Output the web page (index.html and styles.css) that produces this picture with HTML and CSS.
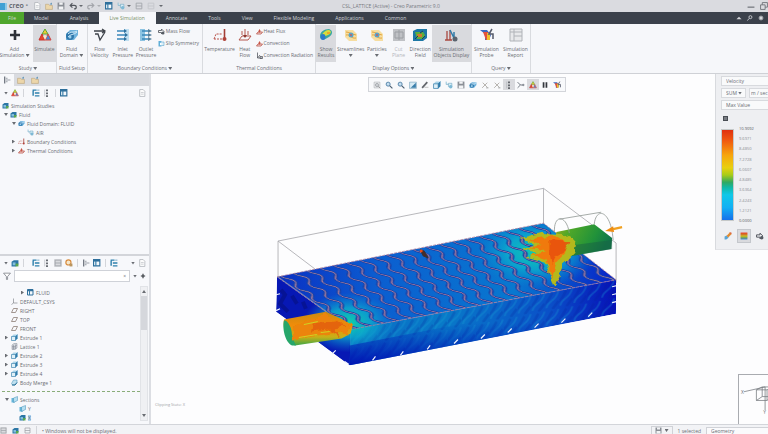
FILE: index.html
```html
<!DOCTYPE html>
<html lang="en">
<head>
  <meta charset="UTF-8">
  <meta name="viewport" content="width=device-width, initial-scale=1.0">
  <title>CSL_LATTICE (Active) - Creo Parametric 9.0</title>
  <link rel="stylesheet" href="styles.css">
</head>
<body>
  <svg class="sprite" aria-hidden="true">
    <defs>
      <linearGradient id="hot" x1="0" y1="0" x2="0" y2="1">
        <stop offset="0" stop-color="#e8301c"/><stop offset=".4" stop-color="#f2a81c"/>
        <stop offset=".6" stop-color="#b8d61c"/><stop offset="1" stop-color="#2a78d8"/>
      </linearGradient>
      <symbol id="i-plus" viewBox="0 0 14 14"><path d="M7 2v10M2 7h10" stroke="#2d3138" stroke-width="2.6"/></symbol>
      <symbol id="i-sim" viewBox="0 0 14 14">
        <path d="M7 1 10 6H4Z" fill="#f2c832" stroke="#58a838"/><path d="M4 6 7 12H1Z" fill="#e34a2c" stroke="#c8302c"/>
        <path d="M10 6 13 12H7Z" fill="#4c84d0" stroke="#d8443c"/><path d="M5 8h4L7 12Z" fill="#f3e6c8"/>
      </symbol>
      <symbol id="i-fluid" viewBox="0 0 14 14">
        <path d="M1 6 5 2h8v5l-4 5H1Z" fill="#6fb2dc"/><ellipse cx="5" cy="8" rx="4" ry="4" fill="#2f78ac"/>
        <path d="M3 9c2-3 6-2 9-5M3 6c3-3 6-1 9-3" fill="none" stroke="#d6edfa"/><circle cx="5" cy="9" r="1.5" fill="#9bd0ee"/>
      </symbol>
      <symbol id="i-velocity" viewBox="0 0 14 14">
        <path d="M1 3h11M9 1l3 2-3 2M2 6h3l2 6 5-8" fill="none" stroke="#3f444b" stroke-width="1.3"/>
      </symbol>
      <symbol id="i-inlet" viewBox="0 0 14 14">
        <path d="M8 1h5v12H8Z" fill="#bfdff1"/><path d="M1 3h8M1 7h9M1 11h8" stroke="#3a88ba" stroke-width="1.5"/>
        <path d="m8 1 3 2-3 2m1 0 3 2-3 2m-1 0 3 2-3 2" fill="#2d6f9c"/>
      </symbol>
      <symbol id="i-outlet" viewBox="0 0 14 14">
        <path d="M1 1h5v12H1Z" fill="#8cc3e2"/><path d="M3 3h7M3 7h8M3 11h7" stroke="#3a88ba" stroke-width="1.5"/>
        <path d="m9 1 4 2-4 2m0 0 4 2-4 2m0 0 4 2-4 2" fill="#557f9c"/>
      </symbol>
      <symbol id="i-mass" viewBox="0 0 14 14">
        <path d="M1 5h6V2l5 5-5 5V9H1Z" fill="none" stroke="#4a4e55" stroke-width="1.6"/><circle cx="10" cy="10" r="3" fill="#555b63"/>
      </symbol>
      <symbol id="i-slip" viewBox="0 0 14 14">
        <path d="M1 2h6v11H1Z" fill="#60afd8"/><path d="M7 4h5v7H7" fill="#d8eef9" stroke="#4f9bc4"/><path d="M4 5l5 3-5 3" fill="#fff"/>
      </symbol>
      <symbol id="i-temp" viewBox="0 0 14 14">
        <path d="M1 11 3 6h6M1 11h8" fill="none" stroke="#b9534a" stroke-dasharray="2 1"/>
        <path d="M11.500 1v9" stroke="#a33e36" stroke-width="1.6"/><circle cx="11.500" cy="11" r="2" fill="#b04239"/>
      </symbol>
      <symbol id="i-heat" viewBox="0 0 14 14">
        <path d="M1 12 4 8h9l-3 4ZM7 1v8M4 3v4M10 3v4" fill="none" stroke="#b5584e"/><path d="M5 7h4l-2 3Z" fill="#8e3a32"/>
      </symbol>
      <symbol id="i-flux" viewBox="0 0 14 14">
        <path d="M1 12 4 8h9l-3 4Z" fill="#f5e0dc" stroke="#b5483e" stroke-width="1.500"/><path d="M6 9c-3-3 1-4 0-7 3 2 4 4 2 7" fill="#c65446"/>
      </symbol>
      <symbol id="i-rad" viewBox="0 0 14 14"><path d="M3 1v11h9M3 12l5-6M8 9h5v4H8Z" fill="none" stroke="#4e5259" stroke-width="1.500"/></symbol>
      <symbol id="i-results" viewBox="0 0 14 14">
        <path d="M1 8C1 4 5 1 10 1c5 2 3 6 0 8s-9 5-9-1Z" fill="#39a8a0"/><path d="M3 7c1-3 4-5 7-5 3 1 2 4-1 5s-5 3-6 0Z" fill="#d8dd3c"/>
        <ellipse cx="4" cy="9" rx="2.500" ry="3" fill="#2c79c8"/><path d="M8 4h3v2H8Z" fill="#f0a726"/>
      </symbol>
      <symbol id="i-stream" viewBox="0 0 14 14">
        <path d="M1 2h8l4 4v7H5L1 9Z" fill="#f6dda0"/><path d="M2 4c3 0 5 2 10 3M2 7c4-1 5 4 10 3" fill="none" stroke="#e3a53c"/>
        <circle cx="7" cy="7" r="2.500" fill="#5ba4c9"/><circle cx="7" cy="7" r="1" fill="#c8605a"/>
      </symbol>
      <symbol id="i-cut" viewBox="0 0 14 14"><path d="M1 1h12v12H1Z" fill="#bfc1c5"/><path d="M3 4h8v6H3ZM7 2v10" fill="none" stroke="#9b9ea3"/></symbol>
      <symbol id="i-direction" viewBox="0 0 14 14">
        <path d="M0 3 4 1h10v9l-4 3H0Z" fill="#1d77a5"/><path d="M2 4h8l2 3-2 4H4Z" fill="#5cae3d"/><path d="M4 6h5v3H5Z" fill="#d07a2e"/>
        <path d="m2 11 3-3M7 5l3-2M9 11l3-3" stroke="#173b66"/>
      </symbol>
      <symbol id="i-objects" viewBox="0 0 14 14">
        <path d="M3 12V3M6 12V2M1 12h7" stroke="#a94940" stroke-width="1.300"/><path d="M6 2l4 8M10 4v6" stroke="#327ca9" stroke-width="1.500"/>
        <circle cx="11" cy="11" r="2.500" fill="#59636e"/>
      </symbol>
      <symbol id="i-probe" viewBox="0 0 14 14">
        <path d="M0 2h7l4 5-2 5H5V6Z" fill="#3c69c0"/><path d="M3 4h5v8H6Z" fill="#e4523c"/><path d="M7 5h3v7H7Z" fill="#efc22c"/>
        <path d="m12 1-3 5h4v5" fill="none" stroke="#54596a" stroke-width="1.500"/>
      </symbol>
      <symbol id="i-report" viewBox="0 0 14 14"><path d="M1 1h12v12H1ZM1 4h12M5 1v12M5 8h8" fill="#e8e9eb" stroke="#b0b3b8"/></symbol>
      <symbol id="i-tree" viewBox="0 0 14 14"><path d="M1 2h7M5 7h8M5 12h8M2 3v9" stroke="#2e80ad" stroke-width="2.500"/><path d="M9 2h4" stroke="#8db7d0" stroke-width="2"/></symbol>
      <symbol id="i-dots" viewBox="0 0 14 14"><path d="M7 1v3M7 6v3M7 11v3" stroke="#55595f" stroke-width="3"/><path d="M3 1v12" stroke="#a7abb1"/></symbol>
      <symbol id="i-grid" viewBox="0 0 14 14"><path d="M1 1h11v11H1Z" fill="#f3f8fb" stroke="#2f6f9b" stroke-width="2"/><path d="M1 3h11" stroke="#2f6f9b" stroke-width="3"/><path d="M5 3v9" stroke="#357ba8" stroke-width="2"/></symbol>
      <symbol id="i-doc" viewBox="0 0 14 14"><path d="M3 1h6l3 3v9H3Z" fill="#fff" stroke="#a9adb4" stroke-width="1.300"/><path d="M5 6h5M5 9h5" stroke="#a9adb4"/></symbol>
      <symbol id="i-folder" viewBox="0 0 14 14"><path d="M1 4h5l2 2h5v7H1Z" fill="#ecd6aa" stroke="#b8a27a"/><path d="m8 4 4-3v4" fill="#5e92b4"/></symbol>
      <symbol id="i-save" viewBox="0 0 14 14"><path d="M1 1h12v12H1Z" fill="#8b8f96"/><path d="M4 1h6v4H4ZM3 8h8v5H3Z" fill="#f2f3f5"/></symbol>
      <symbol id="i-undo" viewBox="0 0 14 14"><path d="M3 6h6c5 0 5 6 0 6M6 2 2 6l4 4" fill="none" stroke="currentColor" stroke-width="2"/></symbol>
      <symbol id="i-part" viewBox="0 0 14 14"><path d="M1 5 5 1h8v8l-4 4H1Z" fill="#a9d3e9"/><path d="M1 5h8v8H1ZM9 5l4-4" fill="#dff0f8" stroke="#3e83ad" stroke-width="1.300"/><path d="M9 5l4-4v8l-4 4Z" fill="#317cab"/></symbol>
      <symbol id="i-cubes" viewBox="0 0 14 14"><path d="M1 5 5 2h8v7l-4 4H1Z" fill="#2c76a5"/><path d="M3 6h5v5H3Z" fill="#82bedb"/><path d="M8 8h5v5H8Z" fill="#59a64e"/></symbol>
      <symbol id="i-air" viewBox="0 0 14 14"><path d="M2 1v5h4M6 4h6v6H6Z" fill="#d6edf6" stroke="#68a1bf"/><circle cx="10" cy="10" r="3" fill="#7eb9d5"/></symbol>
      <symbol id="i-csys" viewBox="0 0 14 14"><path d="M5 1v9h8M5 10l-4 3" fill="none" stroke="#7d8187" stroke-width="1.300"/></symbol>
      <symbol id="i-plane" viewBox="0 0 14 14"><path d="M1 11 5 3h8l-4 8Z" fill="none" stroke="#85776e" stroke-width="1.500"/></symbol>
      <symbol id="i-lattice" viewBox="0 0 14 14"><path d="M2 4 6 1h6v9l-4 3H2Z" fill="#d5d9df" stroke="#848b96"/><path d="M2 7h6l4-3M5 4v9M9 3v9M2 10h7" fill="none" stroke="#7e8590"/></symbol>
      <symbol id="i-merge" viewBox="0 0 14 14"><path d="M1 9 5 2h7v5l-4 5H3Z" fill="#bfe0ef" stroke="#3d8cb6"/><path d="M2 12h6l4-5" fill="none" stroke="#236a93" stroke-width="2"/></symbol>
      <symbol id="i-section" viewBox="0 0 14 14"><path d="M1 4h7v9H1Z" fill="#63b4d9"/><path d="m5 4 8-3v8l-8 4Z" fill="#b6dff0" stroke="#408eb6"/></symbol>
      <symbol id="i-zoom" viewBox="0 0 14 14"><circle cx="5.500" cy="5.500" r="3.500" fill="#c5def0" stroke="#477aa2" stroke-width="1.500"/><path d="m8 8 5 5" stroke="#4b5e70" stroke-width="2"/></symbol>
      <symbol id="i-fit" viewBox="0 0 14 14"><path d="M2 2h10v10H2Z" fill="none" stroke="#9ca0a6"/><circle cx="7" cy="7" r="3" fill="#c9ccd0" stroke="#8a8e94"/><path d="m9 9 4 4" stroke="#777"/></symbol>
      <symbol id="i-repaint" viewBox="0 0 14 14"><path d="M1 2h12v11H1Z" fill="#d7ebf5" stroke="#6d9ab5"/><path d="M12 3v9H3Z" fill="#397eaa"/></symbol>
      <symbol id="i-pen" viewBox="0 0 14 14"><path d="M2 12 11 2" stroke="#62666c" stroke-width="3"/><path d="M6 11h7" stroke="#999"/></symbol>
      <symbol id="i-datum" viewBox="0 0 14 14"><path d="m2 12 9-9M3 3l8 8" stroke="#a09c96" stroke-width="1.300"/><path d="M9 12h4" stroke="#666"/></symbol>
      <symbol id="i-spin" viewBox="0 0 14 14"><path d="M1 2 6 7l-5 5M6 7h6" fill="none" stroke="#5f6670" stroke-width="1.500"/><circle cx="11" cy="7" r="2" fill="#8c929a"/></symbol>
      <symbol id="i-side" viewBox="0 0 14 14"><path d="M3 1v12" stroke="#5f6670" stroke-width="2"/><path d="M5 7h8M5 4h3M5 10h3" stroke="#8c929a" stroke-width="1.500"/></symbol>
      <symbol id="i-pause" viewBox="0 0 14 14"><path d="M4.500 2v10M9.500 2v10" stroke="#33373d" stroke-width="3"/></symbol>
      <symbol id="i-clock" viewBox="0 0 14 14"><circle cx="6" cy="6" r="4.500" fill="#f6e7cb" stroke="#d78a3c" stroke-width="2"/><path d="M8 8h5v5H8Z" fill="#b99560"/></symbol>
      <symbol id="i-brush" viewBox="0 0 14 14"><path d="M1 13V8l4-2 3 4-4 3Z" fill="#5aa5d6"/><path d="m6 8 6-6" stroke="#e08a30" stroke-width="4"/><path d="M9 1h4v3" fill="#d8543c"/></symbol>
      <symbol id="i-layers" viewBox="0 0 14 14"><path d="M1 1h12v12H1Z" fill="url(#hot)"/><path d="M1 4h12M1 7h12M1 10h12" stroke="#556" stroke-width=".5"/></symbol>
      <symbol id="i-filter" viewBox="0 0 14 14"><path d="M1 2h12L8 8v5H6V8Z" fill="#fff" stroke="#72767d" stroke-width="1.300"/></symbol>
      <symbol id="i-gear" viewBox="0 0 14 14"><circle cx="7" cy="7" r="4" fill="currentColor"/><path d="M7 1v12M1 7h12M3 3l8 8M11 3l-8 8" stroke="currentColor" stroke-width="1.500"/></symbol>
      <symbol id="i-search" viewBox="0 0 14 14"><circle cx="8" cy="5" r="3.500" fill="none" stroke="currentColor" stroke-width="2"/><path d="m5 8-4 5" stroke="currentColor" stroke-width="2"/></symbol>
      <symbol id="i-up" viewBox="0 0 14 14"><path d="m1 10 6-6 6 6Z" fill="currentColor"/></symbol>
      <symbol id="i-min" viewBox="0 0 14 14"><path d="M1 9h12" stroke="#6a6e75" stroke-width="2"/></symbol>
      <symbol id="i-restore" viewBox="0 0 14 14"><path d="M1 5h8v8H1ZM4 5V1h9v8H9" fill="none" stroke="#6a6e75" stroke-width="1.500"/></symbol>
      <symbol id="i-box" viewBox="0 0 14 14"><path d="M2 2h10v10H2ZM2 7h10" fill="none" stroke="#a0a4aa" stroke-width="1.500"/></symbol>
    </defs>
  </svg>

  <header class="titlebar">
    <div class="brand"><span class="brand-mark"></span>creo<sup>°</sup></div>
    <div class="quick">
      <button aria-label="New"><svg><use href="#i-doc"/></svg></button>
      <button aria-label="Open"><svg><use href="#i-folder"/></svg></button>
      <button aria-label="Save"><svg><use href="#i-save"/></svg></button>
      <button class="menu" aria-label="Undo"><svg><use href="#i-undo"/></svg></button>
      <button class="menu faded" aria-label="Redo"><svg class="flip"><use href="#i-undo"/></svg></button>
      <button aria-label="Regenerate"><svg><use href="#i-grid"/></svg></button>
      <button class="menu" aria-label="Windows"><svg><use href="#i-air"/></svg></button>
      <button aria-label="Close"><svg><use href="#i-box"/></svg></button>
      <button class="faded" aria-label="Play"><svg><use href="#i-box"/></svg></button>
      <button class="menu" aria-label="Customize"></button>
    </div>
    <h1>CSL_LATTICE (Active) - Creo Parametric 9.0</h1>
    <div class="window-buttons">
      <button aria-label="Minimize"><svg><use href="#i-min"/></svg></button>
      <button aria-label="Restore"><svg><use href="#i-restore"/></svg></button>
    </div>
  </header>

  <nav class="tabs">
    <button class="file">File</button>
    <button>Model</button>
    <button>Analysis</button>
    <button class="active">Live Simulation</button>
    <button>Annotate</button>
    <button>Tools</button>
    <button>View</button>
    <button>Flexible Modeling</button>
    <button>Applications</button>
    <button>Common</button>
    <div class="tab-tools">
      <button aria-label="Collapse ribbon"><svg><use href="#i-up"/></svg></button>
      <button aria-label="Search"><svg><use href="#i-search"/></svg></button>
      <button aria-label="Settings"><svg><use href="#i-gear"/></svg></button>
    </div>
  </nav>

  <section class="ribbon">
    <div class="group g-study">
      <div class="tools">
        <button class="w-m"><svg><use href="#i-plus"/></svg><span>Add<br>Simulation <i class="caret"></i></span></button>
        <button class="w-s on"><svg><use href="#i-sim"/></svg><span>Simulate</span></button>
      </div>
      <h2>Study <i class="caret"></i></h2>
    </div>
    <div class="group g-fluid">
      <div class="tools">
        <button class="w-m"><svg><use href="#i-fluid"/></svg><span>Fluid<br>Domain <i class="caret"></i></span></button>
      </div>
      <h2>Fluid Setup</h2>
    </div>
    <div class="group g-boundary">
      <div class="tools">
        <button class="w-s"><svg><use href="#i-velocity"/></svg><span>Flow<br>Velocity</span></button>
        <button class="w-s"><svg><use href="#i-inlet"/></svg><span>Inlet<br>Pressure</span></button>
        <button class="w-s"><svg><use href="#i-outlet"/></svg><span>Outlet<br>Pressure</span></button>
        <div class="stack">
          <button><svg><use href="#i-mass"/></svg>Mass Flow</button>
          <button><svg><use href="#i-slip"/></svg>Slip Symmetry</button>
        </div>
      </div>
      <h2>Boundary Conditions <i class="caret"></i></h2>
    </div>
    <div class="group g-thermal">
      <div class="tools">
        <button class="w-m"><svg><use href="#i-temp"/></svg><span>Temperature</span></button>
        <button class="w-xs"><svg><use href="#i-heat"/></svg><span>Heat<br>Flow</span></button>
        <div class="stack">
          <button><svg><use href="#i-flux"/></svg>Heat Flux</button>
          <button><svg><use href="#i-flux"/></svg>Convection</button>
          <button><svg><use href="#i-rad"/></svg>Convection Radiation</button>
        </div>
      </div>
      <h2>Thermal Conditions</h2>
    </div>
    <div class="group g-display">
      <div class="tools">
        <button class="w-xs on"><svg><use href="#i-results"/></svg><span>Show<br>Results</span></button>
        <button class="w-m"><svg><use href="#i-stream"/></svg><span>Streamlines<br><i class="caret"></i></span></button>
        <button class="w-s"><svg><use href="#i-stream"/></svg><span>Particles<br><i class="caret"></i></span></button>
        <button class="w-xs" disabled><svg><use href="#i-cut"/></svg><span>Cut<br>Plane</span></button>
        <button class="w-s"><svg><use href="#i-direction"/></svg><span>Direction<br>Field</span></button>
        <button class="w-l on"><svg><use href="#i-objects"/></svg><span>Simulation<br>Objects Display</span></button>
      </div>
      <h2>Display Options <i class="caret"></i></h2>
    </div>
    <div class="group g-query">
      <div class="tools">
        <button class="w-m"><svg><use href="#i-probe"/></svg><span>Simulation<br>Probe</span></button>
        <button class="w-m"><svg><use href="#i-report"/></svg><span>Simulation<br>Report</span></button>
      </div>
      <h2>Query <i class="caret"></i></h2>
    </div>
  </section>

  <main class="workspace">
    <aside class="side">
      <div class="side-tabs">
        <button class="active" aria-label="Model tree"><svg><use href="#i-side"/></svg></button>
        <button aria-label="Folders"><svg><use href="#i-folder"/></svg></button>
        <button aria-label="Favorites"><svg><use href="#i-folder"/></svg></button>
      </div>
      <section class="pane studies">
        <div class="pane-bar">
          <i class="caret"></i>
          <button aria-label="Simulation"><svg><use href="#i-sim"/></svg></button>
          <span class="sep"></span>
          <button class="gap" aria-label="Expand"><svg><use href="#i-tree"/></svg></button>
          <button aria-label="Columns"><svg><use href="#i-dots"/></svg></button>
          <span class="sep"></span>
          <button aria-label="Layout"><svg><use href="#i-grid"/></svg></button>
          <button class="end" aria-label="Settings"><svg><use href="#i-doc"/></svg></button>
        </div>
        <ul class="tree">
          <li class="d0"><svg><use href="#i-cubes"/></svg>Simulation Studies</li>
          <li class="d1"><i class="caret"></i><svg><use href="#i-cubes"/></svg>Fluid</li>
          <li class="d2"><i class="caret"></i><svg><use href="#i-fluid"/></svg>Fluid Domain: FLUID</li>
          <li class="d3"><svg><use href="#i-air"/></svg>AIR</li>
          <li class="d2"><i class="caret right"></i><svg><use href="#i-temp"/></svg>Boundary Conditions</li>
          <li class="d2"><i class="caret right"></i><svg><use href="#i-flux"/></svg>Thermal Conditions</li>
        </ul>
      </section>
      <section class="pane model">
        <div class="pane-bar">
          <i class="caret"></i>
          <button aria-label="Model"><svg><use href="#i-cubes"/></svg></button>
          <span class="sep"></span>
          <button class="gap" aria-label="Expand"><svg><use href="#i-tree"/></svg></button>
          <button aria-label="Columns"><svg><use href="#i-dots"/></svg></button>
          <button class="on" aria-label="Preview"><svg><use href="#i-box"/></svg></button>
          <button aria-label="History"><svg><use href="#i-clock"/></svg></button>
          <span class="sep"></span>
          <button aria-label="Filter"><svg><use href="#i-side"/></svg></button>
          <button aria-label="Layout"><svg><use href="#i-grid"/></svg></button>
          <span class="sep"></span>
          <button aria-label="List"><svg><use href="#i-tree"/></svg></button>
          <i class="caret end"></i>
          <button aria-label="Settings"><svg><use href="#i-doc"/></svg></button>
        </div>
        <div class="filter">
          <svg><use href="#i-filter"/></svg>
          <label><input type="text" aria-label="Filter tree"><span>×</span></label>
          <i class="caret"></i>
          <button aria-label="Add filter"><svg><use href="#i-plus"/></svg></button>
        </div>
        <div class="list">
          <ul class="tree">
            <li class="d2b"><i class="caret right"></i><svg><use href="#i-grid"/></svg>FLUID</li>
            <li class="m"><svg><use href="#i-csys"/></svg>DEFAULT_CSYS</li>
            <li class="m"><svg><use href="#i-plane"/></svg>RIGHT</li>
            <li class="m"><svg><use href="#i-plane"/></svg>TOP</li>
            <li class="m"><svg><use href="#i-plane"/></svg>FRONT</li>
            <li class="d1"><i class="caret right"></i><svg><use href="#i-part"/></svg>Extrude 1</li>
            <li class="m"><svg><use href="#i-lattice"/></svg>Lattice 1</li>
            <li class="d1"><i class="caret right"></i><svg><use href="#i-part"/></svg>Extrude 2</li>
            <li class="d1"><i class="caret right"></i><svg><use href="#i-part"/></svg>Extrude 3</li>
            <li class="d1"><i class="caret right"></i><svg><use href="#i-part"/></svg>Extrude 4</li>
            <li class="m"><svg><use href="#i-merge"/></svg>Body Merge 1</li>
            <li class="insert"></li>
            <li class="d1"><i class="caret"></i><svg><use href="#i-section"/></svg>Sections</li>
            <li class="sub"><svg><use href="#i-section"/></svg>Y</li>
            <li class="sub"><svg><use href="#i-cubes"/></svg><mark>X</mark></li>
          </ul>
          <div class="scroll"><i class="caret up"></i><span></span><i class="caret"></i></div>
        </div>
      </section>
    </aside>

    <section class="canvas">
      <svg class="model-view" viewBox="151 73 617 352" preserveAspectRatio="xMidYMid meet" role="img" aria-label="Velocity result on lattice">
        <defs>
          <!-- wavy lattice walls, laid out along the two edges of the top face -->
          <pattern id="waves" width="14" height="16" patternUnits="userSpaceOnUse" patternTransform="matrix(.957 -.189 1.028 .764 276 277)">
            <path d="M4 0C3 4 10 4 10 8S3 12 4 16" fill="none" stroke="#1440a8" stroke-width="3.200"/>
            <path d="M4 0C3 4 10 4 10 8S3 12 4 16" fill="none" stroke="#a87c9c" stroke-width="1.100"/>
          </pattern>
          <pattern id="ribs" width="14" height="18" patternUnits="userSpaceOnUse" patternTransform="matrix(1 -.19 0 1 350 330)">
            <path d="M1 16C2 8 10 12 13 1" fill="none" stroke="#17a0d4" stroke-width="2" opacity=".3"/>
            <path d="M-3 12C3 12 4 5 7 2M7 18l6-7" fill="none" stroke="#06209a" stroke-width="3" opacity=".22"/>
          </pattern>
          <linearGradient id="top" x1="0" x2="1">
            <stop offset="0" stop-color="#0a2fc4"/><stop offset=".3" stop-color="#0b5ed0"/><stop offset=".7" stop-color="#0878cf"/><stop offset="1" stop-color="#0821c8"/>
          </linearGradient>
          <linearGradient id="front" x1="0" x2="1">
            <stop offset="0" stop-color="#0a6cc4"/><stop offset=".35" stop-color="#087ac8"/><stop offset=".75" stop-color="#0a50c8"/><stop offset="1" stop-color="#0610b8"/>
          </linearGradient>
          <linearGradient id="shade" x1="0" y1="0" x2="0" y2="1">
            <stop offset=".4" stop-color="#0018b8" stop-opacity="0"/><stop offset="1" stop-color="#0012b4"/>
          </linearGradient>
          <radialGradient id="cool"><stop offset="0" stop-color="#10d0a8"/><stop offset=".5" stop-color="#0cb4cc" stop-opacity=".75"/><stop offset="1" stop-color="#0a90d0" stop-opacity="0"/></radialGradient>
          <linearGradient id="pipe" x1="0" x2="0" y1="0" y2="1">
            <stop offset="0" stop-color="#c88a10"/><stop offset=".4" stop-color="#f08c0a"/><stop offset=".75" stop-color="#c8b018"/><stop offset="1" stop-color="#3aa848"/>
          </linearGradient>
          <linearGradient id="outpipe" x1="0" x2="1" y1="0" y2=".3">
            <stop offset="0" stop-color="#a0a81c"/><stop offset=".3" stop-color="#50a828"/><stop offset=".75" stop-color="#21923a"/><stop offset="1" stop-color="#127848"/>
          </linearGradient>
          <filter id="rough" x="-10%" y="-10%" width="120%" height="120%">
            <feTurbulence type="fractalNoise" baseFrequency=".16" numOctaves="2" seed="4"/>
            <feDisplacementMap in="SourceGraphic" scale="6" xChannelSelector="R" yChannelSelector="G"/>
          </filter>
          <clipPath id="body"><path d="M276 277 544 223l73 57v34l-268 52-31-23-43-31Z"/></clipPath>
        </defs>
        <g fill="none" stroke="#a5a6aa" stroke-width=".8">
          <path d="M314 269 277 241 544 188l73 55v40M277 241v37M544 188v37"/>
        </g>
        <g clip-path="url(#body)">
          <path d="M276 277 350 330v37l-75-55Z" fill="#0718b4"/>
          <path d="M350 330 617 280v34L349 367Z" fill="url(#front)"/>
          <path d="M350 330 617 280v34L349 367Z" fill="url(#ribs)"/>
          <path d="M276 277 544 223l73 57-267 50Z" fill="url(#top)"/>
          <ellipse cx="538" cy="252" rx="60" ry="36" fill="url(#cool)"/>
          <ellipse cx="348" cy="323" rx="45" ry="30" fill="url(#cool)"/>
          <path d="M276 277 544 223l73 57-267 50Z" fill="url(#waves)"/>
          <path d="M349 346 617 294v20L349 367Z" fill="url(#shade)"/>
          <path d="M280 290l4 5-5 9 8 8M291 296l5 8M302 302l3 7" fill="none" stroke="#061080" stroke-width="4" opacity=".6"/>
        </g>
        <path d="M276 277 544 223l73 57-267 50Z" fill="none" stroke="#a87c9c" stroke-width=".8" stroke-dasharray="3 1"/>
        <path d="M331 355l4-4M348 365l-4-3M372 361l3-4M400 356l3-4M427 350l3-4M454 344l4-4M481 339l4-4M508 333l4-4M535 328l4-4M562 323l4-4M589 317l4-4M275 295l4-1M275 311l4-2M613 287l4-1M613 295l4-1M613 303l4-1" stroke="#f0f5ff" stroke-width="1.200"/>
        <path d="M283 320 325 312l17 8 10 6-2 8-9 5-47 7c-7-2-13-17-11-26Z" fill="url(#pipe)"/>
        <path d="M291 346c-7-3-10-18-8-25 4-1 8 8 8 14 1 5 3 9 4 11Z" fill="#26a66a"/>
        <path d="M292 327 324 315l12 6 18 4-8 5 2 6-8-3-10 1-38 6Z" fill="#ec8408" filter="url(#rough)"/>
        <path d="M312 324l22-3 12 6-12 2 6 9-12-8-18 2Z" fill="#e35d0a" opacity=".8" filter="url(#rough)"/>
        <path d="M298 338l18-3M303 325l14-3M320 333l9-1" stroke="#d0d420" stroke-width="1"/>
        <path d="M557 232 595 224l18 14-1 11-40 7-18-10Z" fill="url(#outpipe)"/>
        <path d="M575 245 613 240v9l-40 7Z" fill="#175f43" opacity=".5"/>
        <path d="M521 238l20-5 22 1 14 7-2 12-11 11-9 24-8-25-20-5 10-6-16-3 14-4Z" fill="#b5b81c" filter="url(#rough)"/>
        <path d="M529 240l24-5 14 7-1 11-9 9-4 16-6-19-15-4 14-5-18-2 15-3Z" fill="#f07a0a" filter="url(#rough)"/>
        <path d="M550 240l20 2-4 9-10 5-4 8-2-12Z" fill="#e84e0c" opacity=".8" filter="url(#rough)"/>
        <path d="M420 250l4 1 4 7-5-2Z" fill="#4a2c26" stroke="#35323a"/><circle cx="421" cy="251" r="1.500" fill="#e64a18"/>
        <path d="M277 277 326 312" stroke="#8e94b0" stroke-width=".8"/>
        <path d="M555 232c-1-18 12-18 15 1M560 219l42-7M595 224c2-18 17-14 19 16" fill="none" stroke="#8f9692" stroke-width=".8"/>
        <path d="M623 227l-9 2" stroke="#f0a020" stroke-width="2.500"/><path d="M606 231l8-5 1 6Z" fill="#ee8c12"/>
      </svg>

      <div class="view-bar">
        <button aria-label="Refit"><svg><use href="#i-fit"/></svg></button>
        <button aria-label="Zoom in"><svg><use href="#i-zoom"/></svg></button>
        <button aria-label="Zoom out"><svg><use href="#i-zoom"/></svg></button>
        <button aria-label="Repaint"><svg><use href="#i-repaint"/></svg></button>
        <button aria-label="Rendering"><svg><use href="#i-pen"/></svg></button>
        <button aria-label="Display style"><svg><use href="#i-part"/></svg></button>
        <button aria-label="Orientation"><svg><use href="#i-air"/></svg></button>
        <button aria-label="Saved views"><svg><use href="#i-save"/></svg></button>
        <button aria-label="View manager"><svg><use href="#i-fluid"/></svg></button>
        <button aria-label="Perspective"><svg><use href="#i-datum"/></svg></button>
        <button aria-label="Datum display"><svg><use href="#i-datum"/></svg></button>
        <button class="on" aria-label="Annotations"><svg><use href="#i-dots"/></svg></button>
        <button aria-label="Spin center"><svg><use href="#i-spin"/></svg></button>
        <button class="on" aria-label="Simulate"><svg><use href="#i-sim"/></svg></button>
        <button aria-label="Pause"><svg><use href="#i-pause"/></svg></button>
        <button aria-label="Probe"><svg><use href="#i-probe"/></svg></button>
      </div>

      <div class="results">
        <select aria-label="Quantity"><option>Velocity</option></select>
        <div class="pair">
          <div class="drop"><select aria-label="Component"><option>SUM</option></select><i class="caret"></i></div>
          <select aria-label="Unit"><option>m / sec</option></select>
        </div>
        <select aria-label="Range"><option>Max Value</option></select>
        <button class="lock" aria-label="Lock range"></button>
        <div class="legend">
          <div class="ramp"></div>
          <ol>
            <li>10.9092</li><li>9.6971</li><li>8.4850</li><li>7.2728</li><li>6.0607</li>
            <li>4.8485</li><li>3.6364</li><li>2.4243</li><li>1.2121</li><li>0.0000</li>
          </ol>
        </div>
        <div class="legend-tools">
          <button aria-label="Colors"><svg><use href="#i-brush"/></svg></button>
          <button class="on" aria-label="Bands"><svg><use href="#i-layers"/></svg></button>
          <button aria-label="Animate"><svg><use href="#i-mass"/></svg></button>
        </div>
      </div>

      <p class="clip-state">Clipping State: X</p>

      <svg class="triad" viewBox="0 0 30 50" aria-hidden="true">
        <g fill="none" stroke="#777a80" stroke-width=".8">
          <path d="M5 17 27 12v24M18 15l6-3h10v9l-5 5H18ZM18 15h11v11M29 15l5-3M24 12v10l-6 4M24 22h8"/>
        </g>
        <text x="2" y="19">X</text><text x="25" y="40">Y</text>
      </svg>
    </section>
  </main>

  <footer class="status">
    <button class="on" aria-label="Tree"><svg><use href="#i-box"/></svg></button>
    <button aria-label="Browser"><svg><use href="#i-cubes"/></svg></button>
    <button aria-label="Full screen"><svg><use href="#i-box"/></svg></button>
    <span class="sep"></span>
    <p>• Windows will not be displayed.</p>
    <button class="find" aria-label="Find"><svg><use href="#i-save"/></svg><i class="caret"></i></button>
    <span class="count">1 selected</span>
    <select aria-label="Selection filter"><option>Geometry</option></select>
  </footer>
</body>
</html>
```
FILE: styles.css
```css
* { box-sizing: border-box; }
html, body { height: 100%; }
body {
  margin: 0;
  display: flex;
  flex-direction: column;
  overflow: hidden;
  font: 5px/6px "Open Sans", "Noto Sans", sans-serif;
  color: #6a6d73;
  background: #f6f7fa;
}
button, select, input {
  font: inherit;
  color: inherit;
  margin: 0;
  padding: 0;
  border: 0;
  background: none;
}
select { appearance: none; }
h1, h2, p, ul, ol { margin: 0; padding: 0; font: inherit; list-style: none; }
svg { width: 8px; height: 8px; display: block; flex: none; }
.sprite { position: absolute; width: 0; height: 0; }
.flip { transform: scaleX(-1); }
.faded { opacity: .4; }
.on { background: #d9dade; }
.caret {
  display: inline-block;
  flex: none;
  width: 4px;
  height: 3px;
  background: #6a6d73;
  clip-path: polygon(0 0, 100% 0, 50% 100%);
}
.caret.right { width: 3px; height: 4px; clip-path: polygon(0 0, 100% 50%, 0 100%); }
.caret.up { clip-path: polygon(50% 0, 100% 100%, 0 100%); }
.sep { width: 1px; height: 8px; background: #d3d5da; }

/* title bar */
.titlebar {
  position: relative;
  display: flex;
  align-items: center;
  justify-content: space-between;
  height: 12px;
  background: #dadbe0;
}
.brand { display: flex; align-items: center; gap: 2px; width: 33px; font-size: 7px; font-weight: 600; color: #53575e; }
.brand sup { font-size: 5px; }
.brand-mark { width: 7px; height: 7px; background: #41a1d4; border-right: 2px solid #8fc9e6; }
.quick { display: flex; align-items: center; gap: 4px; flex: 1; }
.quick button { display: flex; align-items: center; gap: 2px; color: #53575e; }
.quick .menu::after {
  content: "";
  width: 4px;
  height: 2px;
  background: #666a70;
  clip-path: polygon(0 0, 100% 0, 50% 100%);
}
.titlebar h1 { position: absolute; left: 0; right: 0; text-align: center; padding-left: 14px; pointer-events: none; color: #777a80; }
.window-buttons { display: flex; gap: 5px; }

/* ribbon tabs */
.tabs { display: flex; height: 12px; background: #3b414b; color: #d3d5d9; }
.tabs > button { padding: 0 11px 0 10px; }
.tabs .file { width: 24px; padding: 0; background: #4fa62c; }
.tabs .active { background: #f6f7fa; color: #789064; }
.tab-tools { display: flex; gap: 5px; align-items: center; margin-left: auto; padding-right: 4px; }
.tab-tools svg { width: 6px; height: 6px; }

/* ribbon */
.ribbon { display: flex; height: 50px; border-bottom: 1px solid #cfd1d6; background: #f6f7fa; }
.group { display: flex; flex-direction: column; justify-content: space-between; padding: 1px 0 2px; border-right: 1px solid #d9dbdf; }
.group h2 { text-align: center; }
.g-study { width: 57px; }
.g-fluid { width: 31px; }
.g-boundary { width: 115px; }
.g-thermal { width: 113px; }
.g-display { width: 156px; }
.g-query { width: 59px; }
.tools { display: flex; justify-content: space-between; height: 37px; }
.tools > button { display: flex; flex-direction: column; align-items: center; gap: 4px; padding-top: 3px; height: 37px; white-space: nowrap; }
.tools > button svg { width: 14px; height: 14px; }
.w-xs { width: 20px; }
.w-s { width: 23px; }
.w-m { width: 29px; }
.w-l { width: 39px; }
.g-boundary .tools { padding-right: 3px; }
.g-thermal .tools { padding: 0 2px; }
button:disabled { color: #b4b6ba; }
.stack { display: flex; flex-direction: column; gap: 4px; padding-top: 2px; }
.stack button { display: flex; align-items: center; gap: 1px; height: 8px; white-space: nowrap; }
.stack svg { width: 7px; height: 7px; }

/* side panel */
.workspace { flex: 1; display: flex; min-height: 0; border-bottom: 1px solid #d3d5da; }
.side { display: flex; flex-direction: column; width: 151px; background: #f7f8fb; border-right: 2px solid #dcdee3; }
.side-tabs { display: flex; height: 12px; background: #d9dbe0; }
.side-tabs button { width: 14px; padding-left: 3px; }
.side-tabs .active { background: #f7f8fb; }
.pane-bar { display: flex; align-items: center; gap: 3px; height: 14px; padding: 0 3px 0 4px; }
.pane-bar .sep { margin: 0 1px; }
.pane-bar .gap { margin-left: 4px; }
.pane-bar .end { margin-left: auto; }
.studies { height: 170px; border-bottom: 2px solid #d3d5da; }
.model { flex: 1; display: flex; flex-direction: column; min-height: 0; }
.tree li { display: flex; align-items: center; gap: 2px; height: 9px; white-space: nowrap; }
.tree svg { width: 7px; height: 7px; }
.studies .tree { padding-top: 1px; }
.d0 { padding-left: 2px; }
.d1 { padding-left: 4px; }
.d2 { padding-left: 12px; }
.d2b { padding-left: 19px; }
.d3 { padding-left: 27px; }
.caret.right + svg { margin-left: 1px; }
.filter { display: flex; align-items: center; gap: 3px; height: 12px; padding: 0 3px; }
.filter label { flex: 1; display: flex; align-items: center; height: 12px; padding-right: 3px; background: #fff; border: 1px solid #cfd2d8; }
.filter input { flex: 1; min-width: 0; outline: 0; }
.filter button svg { width: 6px; height: 6px; }
.list { flex: 1; display: flex; min-height: 0; margin-top: 4px; }
.list .tree { flex: 1; padding: 2px 0 0 2px; }
.list .d1 { padding-left: 3px; }
.list .m { padding-left: 9px; }
.list .sub { padding-left: 17px; }
.tree .insert { height: 5px; border-bottom: 1px dashed #8aad7a; margin-bottom: 3px; }
mark { background: #a9d2ee; color: inherit; }
.scroll { display: flex; flex-direction: column; align-items: center; width: 8px; margin: 0 1px 3px 0; padding: 3px 0; background: #eff0f3; border: 1px solid #e1e3e7; }
.scroll span { width: 6px; height: 34px; margin: 3px 0 auto; background: #d5d7dc; }

/* graphics window */
.canvas { position: relative; flex: 1; min-width: 0; background: #fdfdfe; }
.model-view { width: 100%; height: 100%; }
.view-bar {
  position: absolute;
  top: 3px;
  left: 217px;
  display: flex;
  padding: 1px 2px;
  background: #f8f9fb;
  border: 1px solid #d3d5da;
}
.view-bar button { display: flex; align-items: center; justify-content: center; width: 12px; height: 11px; }
.results {
  position: absolute;
  top: 0;
  right: 0;
  width: 53px;
  padding: 2px 0 6px 5px;
  display: flex;
  flex-direction: column;
  gap: 2px;
  background: #eeeff2;
  border-left: 1px solid #d8dade;
  border-bottom: 1px solid #e2e3e7;
  overflow: hidden;
}
.results select { height: 10px; padding-left: 4px; background: #f9fafb; border: 1px solid #d8dade; border-right: 0; }
.pair { display: flex; gap: 3px; }
.drop { display: flex; align-items: center; width: 25px; padding-right: 3px; background: #f9fafb; border: 1px solid #d8dade; }
.results .drop select { flex: 1; min-width: 0; height: 8px; border: 0; }
.results .pair > select { flex: 1; min-width: 0; padding-left: 1px; }
.lock { width: 5px; height: 5px; margin: 4px 2px 3px; background: #777b82; border: 1px solid #494d54; }
.legend { display: flex; gap: 5px; font-size: 4px; color: #8b8e94; }
.ramp {
  width: 13px;
  margin: 3px 0;
  border: 1px solid #c5c8c8;
  background: linear-gradient(#e03010, #f05a10 12%, #f7a50c 28%, #e8d010 42%, #a8cc18 50%, #30a860 58%, #10b8a8 64%, #10c8e8 72%, #12b0f4 86%, #1670ea);
}
.legend ol { display: flex; flex-direction: column; justify-content: space-between; height: 98px; }
.legend li:first-child, .legend li:last-child { color: #55585e; }
.legend-tools { display: flex; gap: 2px; margin-top: 3px; }
.legend-tools button { display: flex; align-items: center; justify-content: center; width: 14px; height: 14px; }
.legend-tools .on { border: 1px solid #c4c7cc; }
.clip-state { position: absolute; left: 4px; bottom: 16px; color: #a0a2a7; font-size: 4px; }
.triad { position: absolute; right: 0; bottom: 0; width: 30px; height: 50px; border: 1px solid #a9abb0; border-width: 1px 0 0 1px; }
.triad text { font-size: 5px; fill: #6a6d73; }

/* status bar */
.status { display: flex; align-items: flex-end; gap: 5px; height: 9px; background: #f2f3f6; }
.status button svg { width: 7px; height: 7px; }
.status .find { display: flex; align-items: center; gap: 3px; margin-left: auto; padding: 0 3px; border: 1px solid #d0d2d7; border-bottom: 0; }
.status select { width: 62px; padding-left: 4px; border: 1px solid #d0d2d7; border-width: 1px 0 0 1px; background: #fafafc; }
```
